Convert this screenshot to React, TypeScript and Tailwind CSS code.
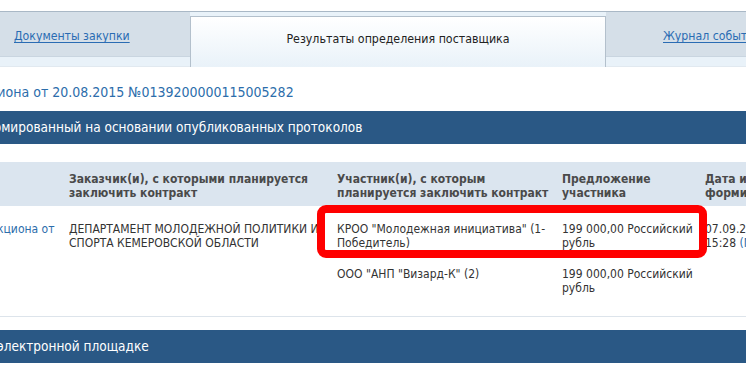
const FONT = { fontFamily: '"DejaVu Sans Condensed", "DejaVu Sans", sans-serif' };

export default function App() {
  return (
    <div className="relative w-[746px] h-[369px] overflow-hidden bg-white text-[#333]" style={FONT}>
      <div className="h-[11px]" />

      {/* tabs */}
      <div className="flex h-[56px] border-t border-[#a9b8c6] bg-[#e9f2f9] border-b border-b-[#e1e9f0]">
        <div className="w-[190px] shrink-0 h-[45px] bg-[#d5dfe8] border-b border-[#c9d5e0] flex items-center pt-[5px] pl-[14px]">
          <a className="text-[12.2px] text-[#2a6cb3] underline underline-offset-2 whitespace-nowrap">Документы закупки</a>
        </div>
        <div className="w-[416px] shrink-0 h-[51px] mt-[4px] border-x border-t border-[#b3c0cc] bg-gradient-to-b from-white to-[#e9f2f9] flex justify-center pt-[13px]">
          <span className="text-[12.3px] text-[#222] whitespace-nowrap">Результаты определения поставщика</span>
        </div>
        <div className="flex-1 min-w-0 overflow-hidden h-[45px] bg-[#d5dfe8] border-b border-[#c9d5e0] flex items-center pt-[5px] pl-[57px]">
          <a className="text-[12.2px] text-[#2a6cb3] underline underline-offset-2 whitespace-nowrap">Журнал событий</a>
        </div>
      </div>

      {/* title */}
      <div className="pt-[13px] h-[44px] whitespace-nowrap overflow-hidden">
        <span className="inline-block ml-[-34px] text-[14px] leading-[20px] text-[#2c6dab]">аукциона от 20.08.2015 №0139200000115005282</span>
      </div>

      {/* section bar */}
      <div className="h-[33px] bg-[#2a5885] flex items-center whitespace-nowrap overflow-hidden">
        <span className="inline-block ml-[-31px] text-[13.5px] text-white">сформированный на основании опубликованных протоколов</span>
      </div>

      {/* table */}
      <div className="mt-[18px] whitespace-nowrap">
        <div className="flex h-[44px] bg-[#dbe5ef] pt-[10px] text-[12px] leading-[14px] font-bold text-[#4a4a4a]">
          <div className="w-[69px] shrink-0" />
          <div className="w-[268px] shrink-0">Заказчик(и), с которыми планируется<br />заключить контракт</div>
          <div className="w-[225px] shrink-0">Участник(и), с которым<br />планируется заключить контракт</div>
          <div className="w-[143px] shrink-0">Предложение<br />участника</div>
          <div className="shrink-0">Дата и время<br />формирования</div>
        </div>

        <div className="flex pt-[16px] h-[111px] border-b border-[#dde4eb] text-[12px] leading-[14px]">
          <div className="w-[69px] shrink-0 overflow-hidden">
            <span className="inline-block ml-[-16px] text-[#2c6dab]">аукциона от</span>
          </div>
          <div className="w-[268px] shrink-0 overflow-hidden">ДЕПАРТАМЕНТ МОЛОДЕЖНОЙ ПОЛИТИКИ И<br />СПОРТА КЕМЕРОВСКОЙ ОБЛАСТИ</div>
          <div className="w-[225px] shrink-0 flex flex-col gap-[17px]">
            <div>КРОО "Молодежная инициатива" (1-<br />Победитель)</div>
            <div>ООО "АНП "Визард-К" (2)</div>
          </div>
          <div className="w-[143px] shrink-0 flex flex-col gap-[17px]">
            <div>199 000,00 Российский<br />рубль</div>
            <div>199 000,00 Российский<br />рубль</div>
          </div>
          <div className="shrink-0">07.09.2015<br />15:28 <span className="text-[#2c6dab]">(МСК)</span></div>
        </div>
      </div>

      {/* second section bar */}
      <div className="mt-[13px] h-[33px] bg-[#2a5885] flex items-center whitespace-nowrap overflow-hidden">
        <span className="inline-block ml-[-3px] text-[13.5px] text-white">электронной площадке</span>
      </div>

      {/* highlight */}
      <div className="absolute left-[317px] top-[205px] w-[390px] h-[53px] border-[8px] border-[#ff0000] rounded-[9px]" />
    </div>
  );
}
